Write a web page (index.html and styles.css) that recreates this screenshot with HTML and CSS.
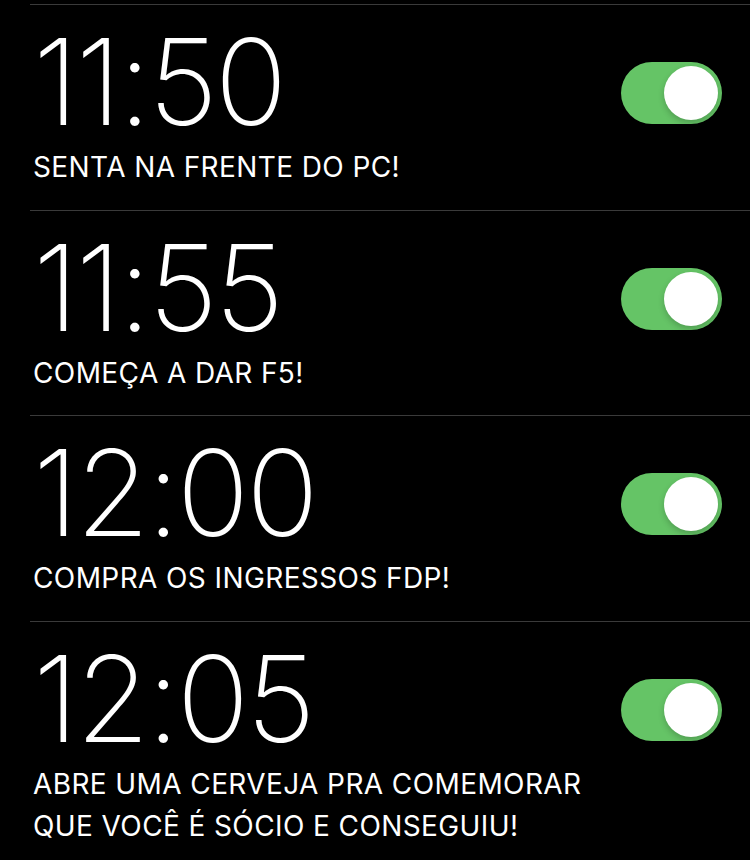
FILE: index.html
```html
<!DOCTYPE html>
<html lang="pt">
<head>
<meta charset="utf-8">
<link rel="stylesheet" href="styles.css">
</head>
<body>
<div class="list">
  <div class="alarm">
    <div class="time">11:50</div>
    <div class="toggle"><span class="knob"></span></div>
    <div class="label">SENTA NA FRENTE DO PC!</div>
  </div>
  <div class="alarm">
    <div class="time">11:55</div>
    <div class="toggle"><span class="knob"></span></div>
    <div class="label">COMEÇA A DAR F5!</div>
  </div>
  <div class="alarm">
    <div class="time">12:00</div>
    <div class="toggle"><span class="knob"></span></div>
    <div class="label">COMPRA OS INGRESSOS FDP!</div>
  </div>
  <div class="alarm">
    <div class="time">12:05</div>
    <div class="toggle"><span class="knob"></span></div>
    <div class="label">ABRE UMA CERVEJA PRA COMEMORAR<br>QUE VOCÊ É SÓCIO E CONSEGUIU!</div>
  </div>
</div>
</body>
</html>
```
FILE: styles.css
```css
html, body {
  margin: 0;
  padding: 0;
  background: #000;
}
body {
  width: 750px;
  height: 860px;
  overflow: hidden;
  font-family: Inter, "Liberation Sans", sans-serif;
  color: #fff;
}
.list {
  padding-top: 4px;
}
.alarm {
  margin-left: 30px;
  border-top: 1px solid #3a3a3a;
  padding: 17px 28px 21.7px 3px;
  display: grid;
  grid-template-columns: 1fr auto;
  row-gap: 4px;
}
.time {
  grid-column: 1;
  grid-row: 1;
  font-size: 120px;
  line-height: 120px;
  font-weight: 200;
  letter-spacing: -3px;
}
.toggle {
  grid-column: 2;
  grid-row: 1;
  align-self: start;
  margin-top: 40px;
  width: 101px;
  height: 62px;
  border-radius: 31px;
  background: #65c466;
  display: flex;
  align-items: center;
  justify-content: flex-end;
  padding: 0 4px;
  box-sizing: border-box;
}
.knob {
  width: 54px;
  height: 54px;
  border-radius: 50%;
  background: #fff;
  box-shadow: 0 3px 6px rgba(0,0,0,0.2);
}
.label {
  grid-column: 1 / span 2;
  grid-row: 2;
  font-size: 28px;
  line-height: 42px;
  font-weight: 400;
  letter-spacing: 0.4px;
}
```
